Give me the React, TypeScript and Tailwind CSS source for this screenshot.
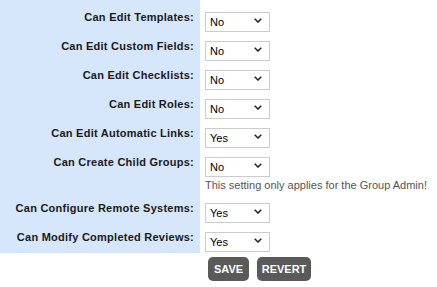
import { useState } from 'react';

interface Permission {
  label: string;
  value: 'Yes' | 'No';
  hint?: string;
}

const permissions: Permission[] = [
  { label: 'Can Edit Templates:', value: 'No' },
  { label: 'Can Edit Custom Fields:', value: 'No' },
  { label: 'Can Edit Checklists:', value: 'No' },
  { label: 'Can Edit Roles:', value: 'No' },
  { label: 'Can Edit Automatic Links:', value: 'Yes' },
  { label: 'Can Create Child Groups:', value: 'No', hint: 'This setting only applies for the Group Admin!' },
  { label: 'Can Configure Remote Systems:', value: 'Yes' },
  { label: 'Can Modify Completed Reviews:', value: 'Yes' },
];

const YesNoSelect = ({ initial }: { initial: string }) => {
  const [value, setValue] = useState(initial);

  return (
    <div className="relative w-[65px] h-[20px]">
      <select
        value={value}
        onChange={(e) => setValue(e.target.value)}
        className="appearance-none w-full h-full border border-[#cccccc] bg-white pl-[4px] pt-[1px] text-[11px] text-black outline-none"
      >
        <option>Yes</option>
        <option>No</option>
      </select>
      <svg
        className="pointer-events-none absolute right-[8px] top-[9px]"
        width="8"
        height="5"
        viewBox="0 0 8 5"
      >
        <path d="M0.7 0.7 L4 4 L7.3 0.7" fill="none" stroke="#222" strokeWidth="1.5" />
      </svg>
    </div>
  );
};

const PermissionRow = ({ item }: { item: Permission }) => (
  <div className={`flex ${item.hint ? 'h-[46px]' : 'h-[29px]'}`}>
    <div className="w-[200px] shrink-0 bg-[#d6e6fb] pr-[6px] pt-[3px] text-right text-[11px] font-bold leading-[20px] text-[#1a1a1a] tracking-[0.25px]">
      {item.label}
    </div>
    <div className="pl-[5px] pt-[5px]">
      <YesNoSelect initial={item.value} />
      {item.hint && (
        <div className="mt-[5px] whitespace-nowrap text-[11px] leading-[13px] text-[#555555]">{item.hint}</div>
      )}
    </div>
  </div>
);

export default function App() {
  return (
    <div className="w-[437px] h-[287px] bg-white font-['Liberation_Sans',Arial,sans-serif] overflow-hidden">
      <div className="flex h-[4px]">
        <div className="w-[200px] bg-[#d6e6fb]" />
      </div>
      {permissions.map((p) => (
        <PermissionRow key={p.label} item={p} />
      ))}
      <div className="flex gap-[8px] pl-[208px] pt-[4px]">
        <button className="w-[41px] h-[24px] rounded-[5px] bg-[#5a5a5a] text-[11px] font-bold text-white">SAVE</button>
        <button className="w-[54px] h-[24px] rounded-[5px] bg-[#5a5a5a] text-[11px] font-bold text-white">REVERT</button>
      </div>
    </div>
  );
}
